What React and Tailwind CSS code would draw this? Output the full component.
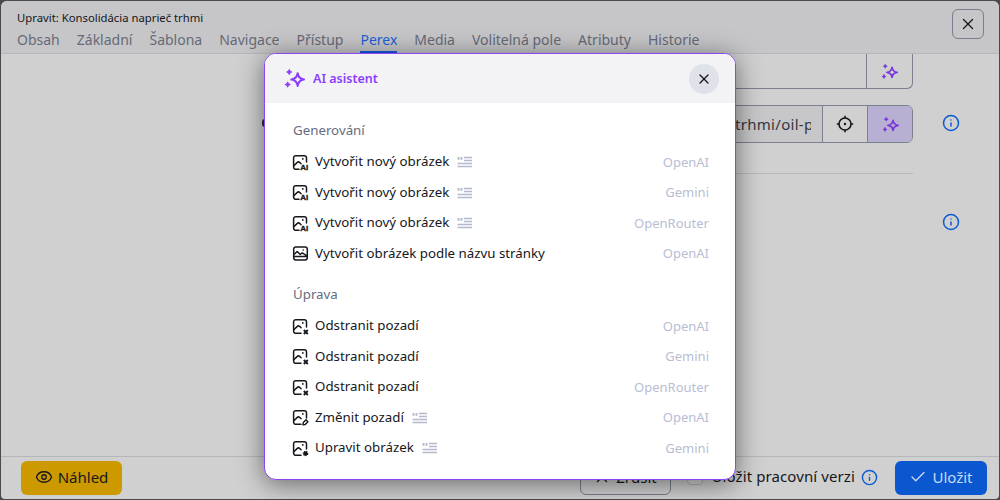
import { Check, Eye, Info, X } from "lucide-react";

const tabs = ["Obsah", "Základní", "Šablona", "Navigace", "Přístup", "Perex", "Media", "Volitelná pole", "Atributy", "Historie"];

const generateItems = [
  { label: "Vytvořit nový obrázek", provider: "OpenAI", badge: "ai", prompt: true },
  { label: "Vytvořit nový obrázek", provider: "Gemini", badge: "ai", prompt: true },
  { label: "Vytvořit nový obrázek", provider: "OpenRouter", badge: "ai", prompt: true },
  { label: "Vytvořit obrázek podle názvu stránky", provider: "OpenAI", badge: "title" },
];

const editItems = [
  { label: "Odstranit pozadí", provider: "OpenAI", badge: "x" },
  { label: "Odstranit pozadí", provider: "Gemini", badge: "x" },
  { label: "Odstranit pozadí", provider: "OpenRouter", badge: "x" },
  { label: "Změnit pozadí", provider: "OpenAI", badge: "pen", prompt: true },
  { label: "Upravit obrázek", provider: "Gemini", badge: "gear", prompt: true },
];

const Sparkles = ({ className }) => (
  <svg className={className} viewBox="0 0 20 20" aria-hidden="true">
    <path d="M13 5c.5 3.600 2.400 5.500 6 6-3.600.5-5.500 2.400-6 6-.5-3.600-2.400-5.500-6-6 3.600-.5 5.500-2.400 6-6Z" fill="none" stroke="currentColor" strokeWidth="2" strokeLinejoin="round" />
    <path d="M5 1.500c.3 1.400.9 2 2.300 2.300C5.900 4.100 5.300 4.700 5 6.100c-.3-1.400-.9-2-2.300-2.300C4.100 3.500 4.700 2.900 5 1.500Z" fill="currentColor" stroke="currentColor" strokeWidth="1" strokeLinejoin="round" />
    <path d="M3.500 13.500c.3 1.400.9 2 2.300 2.300-1.400.3-2 .9-2.300 2.300-.3-1.400-.9-2-2.300-2.300 1.400-.3 2-.9 2.300-2.300Z" fill="currentColor" stroke="currentColor" strokeWidth="1" strokeLinejoin="round" />
  </svg>
);

const ImageIcon = ({ badge }) => (
  <svg className="w-[17px] h-[17px] shrink-0 text-[#15171c]" viewBox="0 0 17 17" fill="none" stroke="currentColor" strokeWidth="1.500" aria-hidden="true">
    {badge === "title" ? (
      <>
        <rect x="1.700" y="2" width="13.600" height="13" rx="2.200" />
        <path d="M2 9.500 5.200 6.500l3 3 2-1.700 4.800 3M2 11.500h13" strokeLinejoin="round" />
        <circle cx="11.300" cy="5" r=".8" fill="currentColor" stroke="none" />
      </>
    ) : (
      <>
        <path d={badge === "ai" ? "M7 15.300H3.800a2.200 2.200 0 0 1-2.200-2.200V3.900a2.200 2.200 0 0 1 2.200-2.200h8.500a2.200 2.200 0 0 1 2.200 2.200V8" : "M9 15.300H3.800a2.200 2.200 0 0 1-2.200-2.200V3.900a2.200 2.200 0 0 1 2.200-2.200h8.500a2.200 2.200 0 0 1 2.200 2.200V9"} strokeLinecap="round" />
        <path d="M1.800 11.800 5.300 8.400c.8-.7 1.500-.7 2.300 0l1.500 1.300" strokeLinecap="round" />
        <circle cx="10.800" cy="4.900" r=".9" fill="currentColor" stroke="none" />
      </>
    )}
    {badge === "ai" && (
      <text x="8.300" y="16" fontSize="8" fontWeight="700" fontFamily="Liberation Sans, sans-serif" fill="currentColor" stroke="currentColor" strokeWidth=".35">AI</text>
    )}
    {badge === "x" && <path d="M11.800 12 15.800 16M15.800 12l-4 4" strokeWidth="1.800" />}
    {badge === "pen" && <path d="m11 15.800.3-2.300 2.700-2.700 1.900 1.900-2.700 2.800-2.200.3Z" strokeWidth="1.400" strokeLinejoin="round" />}
    {badge === "gear" && <circle cx="13.500" cy="13.500" r="2" fill="currentColor" strokeDasharray="1.200 .6" strokeWidth="1.600" />}
  </svg>
);

const PromptIcon = () => (
  <svg className="w-[15px] h-[12px] shrink-0 text-[#b4b9d0]" viewBox="0 0 15 12" fill="none" stroke="currentColor" strokeWidth="1.300" aria-hidden="true">
    <path d="M1.500 1v2.800M4.500 1v2.800" strokeWidth="2" />
    <path d="M7 1.500h8M7 4.500h8M.5 7.500H15M.5 10.500H15" />
  </svg>
);

const Target = () => (
  <svg className="w-[18px] h-[18px]" viewBox="0 0 18 18" fill="none" stroke="#15171c" strokeWidth="1.600" aria-hidden="true">
    <circle cx="9" cy="9" r="6" />
    <circle cx="9" cy="9" r="1.200" fill="#15171c" stroke="none" />
    <path d="M9 .8v2.400M9 14.800v2.400M.8 9h2.400M14.800 9h2.400" />
  </svg>
);

const MenuSection = ({ title, items }) => (
  <section>
    <h3 className="h-[18px] pl-px text-[13.300px] leading-[18px] text-[#666c80]">{title}</h3>
    <ul className="mt-[8px] flex flex-col">
      {items.map((item, i) => (
        <li key={i} className="h-[30.500px] flex items-center gap-[6px] text-[13.300px] text-[#15171c]">
          <ImageIcon badge={item.badge} />
          <span>{item.label}</span>
          {item.prompt && <span className="ml-[2px] flex"><PromptIcon /></span>}
          <span className="ml-auto text-[13px] text-[#b9bdd3]">{item.provider}</span>
        </li>
      ))}
    </ul>
  </section>
);

export default function App() {
  return (
    <div className="relative w-[1000px] h-[500px] overflow-hidden bg-[#4a4a4d] font-['Noto_Sans',sans-serif]">
      <div className="w-[998px] h-[498px] mt-px ml-px flex flex-col rounded-t-[6px] rounded-b-[4px] bg-[#d0d0d1] overflow-hidden">
        <header className="h-[53px] shrink-0 bg-[#c6c6c8] border-b border-[#b6b7bd] flex justify-between pl-[16px] pr-[15px]">
          <div>
            <div className="mt-[9px] text-[11.300px] leading-[16px] text-[#15171c]">Upravit: Konsolidácia naprieč trhmi</div>
            <nav className="mt-[3px] flex gap-[17px] text-[14px] leading-[22px] text-[#666a78]">
              {tabs.map((t) => (
                <span key={t} className={t === "Perex" ? "h-[24px] text-[#1e5fd6] border-b-2 border-[#1457e0]" : ""}>{t}</span>
              ))}
            </nav>
          </div>
          <button type="button" className="mt-[8px] w-[32px] h-[30px] rounded-[6px] border border-[#797d8d] flex items-center justify-center text-[#15171c]">
            <X size={18} strokeWidth={1.700} />
          </button>
        </header>

        <main className="flex-1 relative pr-[86px] flex flex-col items-end">
          <div className="w-[400px] h-[35px] border border-t-0 border-[#7c7f8e] rounded-b-[6px] flex justify-end">
            <div className="w-[46px] border-l border-[#7c7f8e] flex items-center justify-center text-[#7a35dc]"><Sparkles className="w-[17px] h-[17px]" /></div>
          </div>
          <div className="mt-[16px] w-[400px] h-[38px] border border-[#7c7f8e] rounded-[6px] flex overflow-hidden">
            <div className="flex-1 bg-[#c7c7c9] pr-[11px] flex items-center justify-end text-[15px] tracking-[0.3px] text-[#33363f]">
              <span className="w-[76px] overflow-hidden whitespace-nowrap">trhmi/oil-price</span>
            </div>
            <div className="w-[45px] bg-[#d0d0d1] border-l border-[#7c7f8e] flex items-center justify-center"><Target /></div>
            <div className="w-[45px] bg-[#b8b0d2] border-l border-[#7c7f8e] flex items-center justify-center text-[#7a35dc]"><Sparkles className="w-[17px] h-[17px]" /></div>
          </div>
          <div className="mt-[30px] w-[400px] border-t border-[#b9b9bc]" />
          <span className="absolute left-[261px] top-[65px] w-[3px] h-[8px] rounded-l-full bg-[#2e2e32]" />
          <Info className="absolute left-[941px] top-[60px] text-[#0b5bd3]" size={18} strokeWidth={2} />
          <Info className="absolute left-[941px] top-[159px] text-[#0b5bd3]" size={18} strokeWidth={2} />
        </main>

        <footer className="h-[43px] shrink-0 border-t border-[#b6b7bd] flex items-start pt-[4px] pl-[20px] pr-[12px]">
          <button type="button" className="w-[101px] h-[34px] pb-[2px] rounded-[6px] bg-[#cc9900] flex items-center justify-center gap-[5px] text-[15px] text-[#15171c]">
            <Eye size={18} strokeWidth={1.700} />Náhled
          </button>
          <button type="button" className="ml-auto w-[91px] h-[34px] pb-[2px] rounded-[6px] border border-[#797d8d] flex items-center justify-center gap-[5px] text-[15px] text-[#15171c]">
            <X size={18} strokeWidth={1.700} />Zrušit
          </button>
          <span className="ml-[16px] mt-[8px] w-[16px] h-[16px] rounded-[4px] border border-[#b0b1b8] bg-[#d6d6d7]" />
          <span className="ml-[9px] mt-[4px] text-[15px] leading-[22px] tracking-[0.1px] text-[#15171c]">Uložit pracovní verzi</span>
          <Info className="ml-[6px] mt-[8px] text-[#0b5bd3]" size={17} strokeWidth={2} />
          <button type="button" className="ml-[17px] w-[92px] h-[34px] pb-[2px] rounded-[6px] bg-[#0b57d0] flex items-center justify-center gap-[5px] text-[15px] text-[#c9d9f4]">
            <Check size={18} strokeWidth={1.800} />Uložit
          </button>
        </footer>
      </div>

      <div className="absolute left-[264px] top-[53px] w-[472px] h-[427px] rounded-[12px] border border-[#8b45f5] bg-white shadow-[0_4px_26px_rgba(0,0,0,0.5)] overflow-hidden">
        <div className="h-[49px] bg-[#f3f3f6] flex items-center pl-[19px] pr-[16px]">
          <Sparkles className="w-[21px] h-[21px] text-[#8b3dff]" />
          <span className="ml-[8px] mt-px text-[12.500px] font-semibold text-[#8b3dff]">AI asistent</span>
          <button type="button" className="ml-auto w-[30px] h-[30px] rounded-full bg-[#e0e2ea] flex items-center justify-center text-[#15171c]">
            <X size={16} strokeWidth={1.800} />
          </button>
        </div>
        <div className="pt-[18px] pl-[27px] pr-[26px] flex flex-col gap-[16px]">
          <MenuSection title="Generování" items={generateItems} />
          <MenuSection title="Úprava" items={editItems} />
        </div>
      </div>
    </div>
  );
}
